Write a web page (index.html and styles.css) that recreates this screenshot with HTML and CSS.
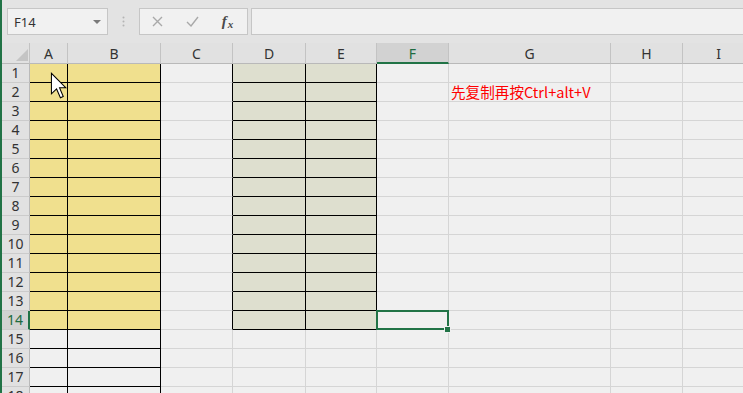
FILE: index.html
```html
<!DOCTYPE html>
<html lang="zh-CN">
<head>
<meta charset="utf-8">
<title>Sheet</title>
<link rel="stylesheet" href="styles.css">
</head>
<body>
<div class="app">
  <div class="toolbar">
    <div class="namebox"><span class="ref">F14</span><span class="caret"></span></div>
    <div class="sep"><svg width="3" height="11" viewBox="0 0 3 11"><circle cx="1.5" cy="1.5" r="1" /><circle cx="1.5" cy="5.5" r="1" /><circle cx="1.5" cy="9.5" r="1" /></svg></div>
    <div class="fxgroup">
      <span class="btn"><svg width="11" height="11" viewBox="0 0 11 11"><path d="M1 1 L10 10 M10 1 L1 10" /></svg></span>
      <span class="btn"><svg width="13" height="11" viewBox="0 0 13 11"><path d="M1 6 L5 10 L12 1" /></svg></span>
      <span class="btn fx"><i class="f">f</i><i class="x">x</i></span>
    </div>
    <div class="input"></div>
  </div>
  <div class="sheet">
    <div class="ch corner"></div><div class="ch">A</div><div class="ch">B</div><div class="ch">C</div><div class="ch">D</div><div class="ch">E</div><div class="ch sel">F</div><div class="ch">G</div><div class="ch">H</div><div class="ch">I</div>

    <div class="rh">1</div><div class="c y"></div><div class="c y"></div><div class="c cr"></div><div class="c g"></div><div class="c g"></div><div class="c"></div><div class="c"></div><div class="c"></div><div class="c"></div>
    <div class="rh">2</div><div class="c y"></div><div class="c y"></div><div class="c cr"></div><div class="c g"></div><div class="c g"></div><div class="c"></div><div class="c"><span class="note">先复制再按Ctrl+alt+V</span></div><div class="c"></div><div class="c"></div>
    <div class="rh">3</div><div class="c y"></div><div class="c y"></div><div class="c cr"></div><div class="c g"></div><div class="c g"></div><div class="c"></div><div class="c"></div><div class="c"></div><div class="c"></div>
    <div class="rh">4</div><div class="c y"></div><div class="c y"></div><div class="c cr"></div><div class="c g"></div><div class="c g"></div><div class="c"></div><div class="c"></div><div class="c"></div><div class="c"></div>
    <div class="rh">5</div><div class="c y"></div><div class="c y"></div><div class="c cr"></div><div class="c g"></div><div class="c g"></div><div class="c"></div><div class="c"></div><div class="c"></div><div class="c"></div>
    <div class="rh">6</div><div class="c y"></div><div class="c y"></div><div class="c cr"></div><div class="c g"></div><div class="c g"></div><div class="c"></div><div class="c"></div><div class="c"></div><div class="c"></div>
    <div class="rh">7</div><div class="c y"></div><div class="c y"></div><div class="c cr"></div><div class="c g"></div><div class="c g"></div><div class="c"></div><div class="c"></div><div class="c"></div><div class="c"></div>
    <div class="rh">8</div><div class="c y"></div><div class="c y"></div><div class="c cr"></div><div class="c g"></div><div class="c g"></div><div class="c"></div><div class="c"></div><div class="c"></div><div class="c"></div>
    <div class="rh">9</div><div class="c y"></div><div class="c y"></div><div class="c cr"></div><div class="c g"></div><div class="c g"></div><div class="c"></div><div class="c"></div><div class="c"></div><div class="c"></div>
    <div class="rh">10</div><div class="c y"></div><div class="c y"></div><div class="c cr"></div><div class="c g"></div><div class="c g"></div><div class="c"></div><div class="c"></div><div class="c"></div><div class="c"></div>
    <div class="rh">11</div><div class="c y"></div><div class="c y"></div><div class="c cr"></div><div class="c g"></div><div class="c g"></div><div class="c"></div><div class="c"></div><div class="c"></div><div class="c"></div>
    <div class="rh">12</div><div class="c y"></div><div class="c y"></div><div class="c cr"></div><div class="c g"></div><div class="c g"></div><div class="c"></div><div class="c"></div><div class="c"></div><div class="c"></div>
    <div class="rh">13</div><div class="c y"></div><div class="c y"></div><div class="c cr"></div><div class="c g"></div><div class="c g"></div><div class="c"></div><div class="c"></div><div class="c"></div><div class="c"></div>
    <div class="rh sel">14</div><div class="c y"></div><div class="c y"></div><div class="c cr"></div><div class="c g"></div><div class="c g"></div><div class="c active"><span class="handle"></span></div><div class="c"></div><div class="c"></div><div class="c"></div>
    <div class="rh">15</div><div class="c k"></div><div class="c k"></div><div class="c"></div><div class="c"></div><div class="c"></div><div class="c"></div><div class="c"></div><div class="c"></div><div class="c"></div>
    <div class="rh">16</div><div class="c k"></div><div class="c k"></div><div class="c"></div><div class="c"></div><div class="c"></div><div class="c"></div><div class="c"></div><div class="c"></div><div class="c"></div>
    <div class="rh">17</div><div class="c k"></div><div class="c k"></div><div class="c"></div><div class="c"></div><div class="c"></div><div class="c"></div><div class="c"></div><div class="c"></div><div class="c"></div>
    <div class="rh">18</div><div class="c k"></div><div class="c k"></div><div class="c"></div><div class="c"></div><div class="c"></div><div class="c"></div><div class="c"></div><div class="c"></div><div class="c"></div>
  </div>
  <svg class="cursor" width="17" height="27" viewBox="0 0 13 21"><path d="M1 1 L1 17 L5 13.2 L8 20 L10.2 19 L7.3 12.3 L12.3 12.3 Z" /></svg>
</div>
</body>
</html>
```

FILE: styles.css
```css
html, body {
  margin: 0;
  padding: 0;
}
body {
  background: #e3e3e3;
  font-family: "Noto Sans", "Liberation Sans", sans-serif;
}
.app {
  position: relative;
  height: 393px;
  overflow: hidden;
  border-left: 2px solid #217346;
  background: #e3e3e3;
  display: flex;
  flex-direction: column;
}
.toolbar {
  height: 43px;
  flex: none;
  box-sizing: border-box;
  padding: 8px 0 0 5px;
  display: flex;
  align-items: flex-start;
}
.namebox {
  width: 101px;
  height: 27px;
  box-sizing: border-box;
  border: 1px solid #c6c6c6;
  background: #f1f1f1;
  display: flex;
  align-items: center;
  padding-left: 6px;
}
.ref {
  font-size: 13px;
  color: #333;
  line-height: 16px;
}
.caret {
  margin-left: auto;
  margin-right: 6px;
  width: 0;
  height: 0;
  border-left: 4px solid transparent;
  border-right: 4px solid transparent;
  border-top: 4px solid #7a7a7a;
}
.sep {
  width: 31px;
  height: 27px;
  display: flex;
  align-items: center;
  justify-content: center;
}
.sep svg circle {
  fill: #b4b4b4;
}
.fxgroup {
  width: 109px;
  height: 27px;
  box-sizing: border-box;
  border: 1px solid #c6c6c6;
  background: #f1f1f1;
  display: flex;
  align-items: center;
}
.btn {
  width: 35px;
  height: 25px;
  display: flex;
  align-items: center;
  justify-content: center;
}
.btn svg path {
  fill: none;
  stroke: #a9a9a9;
  stroke-width: 1.4;
}
.fx {
  font-family: "Liberation Serif", serif;
  color: #4a4a4a;
  font-weight: bold;
}
.fx .f {
  font-size: 15px;
  line-height: 15px;
}
.fx .x {
  font-size: 11px;
  line-height: 11px;
  margin-top: 5px;
  margin-left: 1px;
}
.input {
  flex: 1;
  height: 27px;
  margin-left: 3px;
  box-sizing: border-box;
  border: 1px solid #c6c6c6;
  border-right: none;
  background: #f1f1f1;
}
.sheet {
  flex: 1;
  display: grid;
  grid-template-columns: 28px 38px 93px 72px 73px 71px 72px 162px 72px 72px;
  grid-template-rows: 21px;
  grid-auto-rows: 19px;
  overflow: hidden;
  background: #f0f0f0;
}
.ch {
  box-sizing: border-box;
  background: #e1e1e1;
  border-right: 1px solid #c3c3c3;
  border-bottom: 1px solid #b9b9b9;
  text-align: center;
  font-size: 14px;
  line-height: 20px;
  padding-top: 1px;
  color: #333;
}
.ch.sel {
  background: #d2d2d2;
  border-bottom: 2px solid #217346;
  color: #1e6b40;
}
.corner {
  position: relative;
}
.corner::after {
  content: "";
  position: absolute;
  right: 1px;
  bottom: 2px;
  width: 0;
  height: 0;
  border-left: 12px solid transparent;
  border-bottom: 12px solid #c4c4c4;
}
.rh {
  box-sizing: border-box;
  background: #e1e1e1;
  border-right: 1px solid #b9b9b9;
  border-bottom: 1px solid #cbcbcb;
  text-align: center;
  font-size: 14px;
  line-height: 18px;
  color: #333;
}
.rh.sel {
  background: #d2d2d2;
  border-right: 2px solid #217346;
  color: #1e6b40;
}
.c {
  box-sizing: border-box;
  border-right: 1px solid #d5d5d5;
  border-bottom: 1px solid #d5d5d5;
  background: #f0f0f0;
  position: relative;
}
.y {
  background: #f0e08e;
  border-right-color: #000;
  border-bottom-color: #000;
}
.g {
  background: #dedfcf;
  border-right-color: #000;
  border-bottom-color: #000;
}
.k {
  border-right-color: #000;
  border-bottom-color: #000;
}
.cr {
  border-right-color: #000;
}
.note {
  display: block;
  padding-left: 2px;
  white-space: nowrap;
  font-family: "Noto Sans CJK SC", "Noto Sans", sans-serif;
  font-size: 14.6px;
  line-height: 18px;
  color: #f00;
}
.active::before {
  content: "";
  position: absolute;
  top: -1px;
  left: -1px;
  right: -1px;
  bottom: -1px;
  border: 2px solid #217346;
  z-index: 2;
}
.handle {
  position: absolute;
  right: -3px;
  bottom: -4px;
  width: 5px;
  height: 5px;
  background: #217346;
  border: 1px solid #f0f0f0;
  z-index: 3;
}
.cursor {
  position: absolute;
  left: 48px;
  top: 72px;
  z-index: 5;
}
.cursor path {
  fill: #fff;
  stroke: #000;
  stroke-width: 0.8;
  stroke-linejoin: miter;
}
```
